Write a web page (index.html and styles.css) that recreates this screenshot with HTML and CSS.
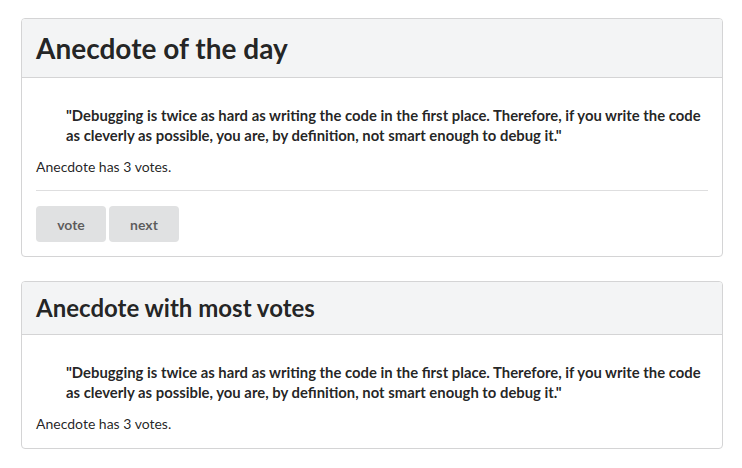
FILE: index.html
```html
<!DOCTYPE html>
<html>
<head>
<meta charset="utf-8">
<link rel="stylesheet" href="styles.css">
</head>
<body>
<div class="page">
  <section class="card">
    <div class="card-header"><h1 class="title title-lg">Anecdote of the day</h1></div>
    <div class="card-body">
      <blockquote class="quote">"Debugging is twice as hard as writing the code in the first place. Therefore, if you write the code as cleverly as possible, you are, by definition, not smart enough to debug it."</blockquote>
      <p class="votes">Anecdote has 3 votes.</p>
      <hr class="divider">
      <div class="actions">
        <button class="btn">vote</button>
        <button class="btn">next</button>
      </div>
    </div>
  </section>
  <section class="card">
    <div class="card-header"><h2 class="title title-md">Anecdote with most votes</h2></div>
    <div class="card-body">
      <blockquote class="quote">"Debugging is twice as hard as writing the code in the first place. Therefore, if you write the code as cleverly as possible, you are, by definition, not smart enough to debug it."</blockquote>
      <p class="votes">Anecdote has 3 votes.</p>
    </div>
  </section>
</div>
</body>
</html>
```
FILE: styles.css
```css
html, body {
  margin: 0;
  padding: 0;
  background: #ffffff;
}
body {
  font-family: Lato, "Open Sans", "Liberation Sans", sans-serif;
  font-size: 14px;
  line-height: 20px;
  color: rgba(0, 0, 0, 0.87);
}
.page {
  padding: 18px 19px 0 21px;
  display: flex;
  flex-direction: column;
  gap: 24px;
}
.card {
  border: 1px solid #d4d4d5;
  border-radius: 4px;
  background: #fff;
  overflow: hidden;
}
.card-header {
  background: #f3f4f5;
  border-bottom: 1px solid #d4d4d5;
  padding: 14px 14px;
}
.title {
  margin: 0;
  font-weight: 700;
  color: rgba(0, 0, 0, 0.87);
}
.title-lg {
  font-size: 28px;
  line-height: 30px;
}
.title-md {
  font-size: 24px;
  line-height: 24px;
}
.card-body {
  padding: 14px 14px 14px 14px;
}
.quote {
  margin: 13px 0 0 30px;
  font-weight: 700;
  font-size: 14.85px;
  line-height: 20px;
}
.votes {
  margin: 12px 0 0 0;
  font-size: 14px;
  line-height: 20px;
}
.divider {
  margin: 13px 0 15px 0;
  border: 0;
  border-top: 1px solid #dededf;
  height: 0;
}
.actions {
  display: flex;
  gap: 3px;
}
.btn {
  font-family: inherit;
  font-size: 14px;
  font-weight: 700;
  color: rgba(0, 0, 0, 0.6);
  background: #e0e1e2;
  border: 0;
  border-radius: 4px;
  width: 70px;
  height: 36px;
  padding: 0;
}
```
